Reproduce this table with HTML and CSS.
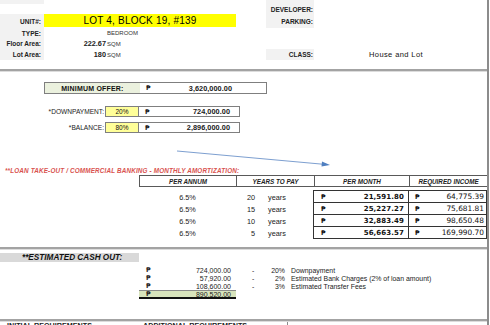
FILE: index.html
```html
<!DOCTYPE html>
<html>
<head>
<meta charset="utf-8">
<link rel="stylesheet" href="styles.css">
</head>
<body>
<div class="sheet">
  <section class="info">
    <div class="lbl r1">DOCUMENT#:</div>
    <div class="rlbl r1"></div>
    <div class="rlbl r2">DEVELOPER:</div>
    <div class="lbl r3">UNIT#:</div>
    <div class="unit">LOT 4, BLOCK 19, #139</div>
    <div class="rlbl r3">PARKING:</div>
    <div class="lbl r4">TYPE:</div>
    <div class="unitcol r4">BEDROOM</div>
    <div class="lbl r5">Floor Area:</div>
    <div class="num r5">222.67</div>
    <div class="unitcol r5">SQM</div>
    <div class="lbl r6">Lot Area:</div>
    <div class="num r6">180</div>
    <div class="unitcol r6">SQM</div>
    <div class="rlbl r6">CLASS:</div>
    <div class="rval r6">House and Lot</div>
  </section>
  <div class="rule"></div>
  <section class="offer">
    <div class="minrow">
      <div class="minlabel">MINIMUM OFFER:</div>
      <div class="money"><span class="peso">₱</span><span>3,620,000.00</span></div>
    </div>
    <div class="dprow">
      <div class="dplabel">*DOWNPAYMENT:</div>
      <div class="pct">20%</div>
      <div class="money boxed"><span class="peso">₱</span><span>724,000.00</span></div>
    </div>
    <div class="dprow bal">
      <div class="dplabel">*BALANCE:</div>
      <div class="pct">80%</div>
      <div class="money boxed"><span class="peso">₱</span><span>2,896,000.00</span></div>
    </div>
    <div class="loantitle">**LOAN TAKE-OUT / COMMERCIAL BANKING - MONTHLY AMORTIZATION:</div>
    <div class="thead">
      <div>PER ANNUM</div>
      <div>YEARS TO PAY</div>
      <div>PER MONTH</div>
      <div>REQUIRED INCOME</div>
    </div>
    <div class="tbody">
      <div class="lcols">
        <div class="lrow"><span class="rate">6.5%</span><span class="yn">20</span><span class="yw">years</span></div>
        <div class="lrow"><span class="rate">6.5%</span><span class="yn">15</span><span class="yw">years</span></div>
        <div class="lrow"><span class="rate">6.5%</span><span class="yn">10</span><span class="yw">years</span></div>
        <div class="lrow"><span class="rate">6.5%</span><span class="yn">5</span><span class="yw">years</span></div>
      </div>
      <div class="box">
        <div class="brow"><div class="pm"><span class="peso">₱</span><span>21,591.80</span></div><div class="ri"><span class="peso">₱</span><span>64,775.39</span></div></div>
        <div class="brow"><div class="pm"><span class="peso">₱</span><span>25,227.27</span></div><div class="ri"><span class="peso">₱</span><span>75,681.81</span></div></div>
        <div class="brow"><div class="pm"><span class="peso">₱</span><span>32,883.49</span></div><div class="ri"><span class="peso">₱</span><span>98,650.48</span></div></div>
        <div class="brow"><div class="pm"><span class="peso">₱</span><span>56,663.57</span></div><div class="ri"><span class="peso">₱</span><span>169,990.70</span></div></div>
      </div>
    </div>
    <svg class="arrow" width="160" height="20" viewBox="0 0 160 20">
      <line x1="1" y1="2" x2="150" y2="15.5" stroke="#7d9fd0" stroke-width="1"/>
      <polygon points="154,16 146,12.5 145.5,17.5" fill="#4f7fc0"/>
    </svg>
  </section>
  <div class="rule"></div>
  <section class="cash">
    <div class="cashlabel">**ESTIMATED CASH OUT:</div>
    <div class="crow"><div class="cmoney"><span class="peso">₱</span><span>724,000.00</span></div><span class="dash">-</span><span class="cpct">20%</span><span class="cdesc">Downpayment</span></div>
    <div class="crow"><div class="cmoney"><span class="peso">₱</span><span>57,920.00</span></div><span class="dash">-</span><span class="cpct">2%</span><span class="cdesc">Estimated Bank Charges (2% of loan amount)</span></div>
    <div class="crow"><div class="cmoney"><span class="peso">₱</span><span>108,600.00</span></div><span class="dash">-</span><span class="cpct">3%</span><span class="cdesc">Estimated Transfer Fees</span></div>
    <div class="crow"><div class="cmoney total"><span class="peso">₱</span><span>890,520.00</span></div></div>
  </section>
  <div class="rule"></div>
  <section class="req">
    <div class="req1">INITIAL REQUIREMENTS</div>
    <div class="req2">ADDITIONAL REQUIREMENTS</div>
    <div class="req3"></div>
  </section>
</div>
</body>
</html>
```
FILE: styles.css
```css
html, body {
  margin: 0;
  padding: 0;
  background: #fff;
}
body {
  width: 490px;
  height: 325px;
  overflow: hidden;
  font-family: "Liberation Sans", "DejaVu Sans", sans-serif;
  color: #111;
}
.sheet {
  position: relative;
  width: 487px;
  height: 325px;
  border-right: 2px solid #8c8c8c;
  overflow: hidden;
}
.peso {
  font-family: "DejaVu Sans", sans-serif;
  font-weight: bold;
}

/* ---------- info grid ---------- */
.info {
  display: grid;
  grid-template-columns: 44px 62px 130px 30px 48px 1fr;
  grid-template-rows: 10px 10px 14px 10.5px 10.5px 11px;
  margin-top: -6px;
  height: 75px;
  align-content: start;
}
.r1 { grid-row: 1; }
.r2 { grid-row: 2; }
.r3 { grid-row: 3; }
.r4 { grid-row: 4; }
.r5 { grid-row: 5; }
.r6 { grid-row: 6; }
.lbl {
  grid-column: 1;
  background: #f2f2f2;
  font-size: 6.5px;
  font-weight: bold;
  text-align: right;
  padding-right: 3px;
  display: flex;
  align-items: center;
  justify-content: flex-end;
  color: #222;
}
.lbl.r1 { align-items: flex-start; line-height: 6px; }
.rlbl {
  grid-column: 5;
  background: #f2f2f2;
  font-size: 6.5px;
  font-weight: bold;
  padding-right: 1px;
  display: flex;
  align-items: center;
  justify-content: flex-end;
  color: #222;
}
.unit {
  grid-column: 2 / 4;
  grid-row: 3;
  height: 13px;
  background: #ffff00;
  font-size: 10px;
  letter-spacing: 0.2px;
  display: flex;
  align-items: center;
  justify-content: center;
  color: #000;
}
.unitcol {
  grid-column: 3;
  font-size: 6px;
  padding-left: 1px;
  display: flex;
  align-items: center;
  color: #333;
}
.num {
  grid-column: 2;
  font-size: 7.3px;
  font-weight: bold;
  display: flex;
  align-items: center;
  justify-content: flex-end;
  color: #222;
}
.rval {
  grid-column: 6;
  font-size: 7.5px;
  letter-spacing: 0.4px;
  padding-left: 55px;
  display: flex;
  align-items: center;
  color: #111;
}

/* ---------- rules ---------- */
.rule {
  height: 2px;
  background: #a3a3a3;
  border-bottom: 1px solid #dcdcdc;
}

/* ---------- offer ---------- */
.offer {
  position: relative;
  height: 175px;
  padding-top: 10px;
  box-sizing: border-box;
}
.minrow {
  display: flex;
  margin-left: 44px;
  width: 223px;
  height: 12px;
  border: 1px solid #7f7f7f;
  box-sizing: border-box;
}
.minlabel {
  width: 95px;
  background: #ebf1de;
  font-size: 7px;
  font-weight: bold;
  letter-spacing: 0.2px;
  display: flex;
  align-items: center;
  justify-content: center;
}
.money {
  width: 97px;
  box-sizing: border-box;
  display: flex;
  align-items: center;
  justify-content: space-between;
  padding: 0 5px 0 6px;
  font-size: 7.3px;
  font-weight: bold;
  letter-spacing: 0.05px;
  color: #1a1a1a;
}
.money .peso { font-size: 6.5px; }
.dprow {
  display: flex;
  height: 11px;
  margin-top: 12px;
}
.dprow.bal { margin-top: 5px; }
.dplabel {
  width: 105px;
  box-sizing: border-box;
  padding-right: 1px;
  font-size: 6.6px;
  display: flex;
  align-items: center;
  justify-content: flex-end;
  color: #222;
}
.pct {
  width: 34px;
  box-sizing: border-box;
  background: #ffff99;
  border: 1px solid #7f7f7f;
  font-size: 6.5px;
  display: flex;
  align-items: center;
  justify-content: center;
}
.money.boxed {
  width: 101px;
  padding-right: 9px;
  border: 1px solid #7f7f7f;
  border-left: none;
}
.loantitle {
  margin-top: 33px;
  padding-left: 5px;
  font-size: 6.35px;
  font-weight: bold;
  font-style: italic;
  color: #d9534f;
  height: 9px;
  line-height: 9px;
  letter-spacing: 0.15px;
}
.thead {
  display: grid;
  grid-template-columns: 97px 78px 95px 78px;
  margin-left: 139px;
  margin-top: 0px;
  height: 12px;
  box-sizing: border-box;
  border: 1px solid #595959;
  border-right: none;
}
.thead div {
  border-right: 1px solid #595959;
  font-size: 6.3px;
  font-weight: bold;
  font-style: italic;
  display: flex;
  align-items: center;
  justify-content: center;
  color: #222;
}
.tbody {
  display: flex;
  margin-left: 139px;
  margin-top: 3px;
}
.lcols {
  width: 175px;
  padding-top: 1px;
}
.lrow {
  display: flex;
  height: 12px;
  align-items: center;
  font-size: 7.3px;
  color: #222;
}
.rate {
  width: 97px;
  text-align: center;
}
.yn {
  width: 19px;
  text-align: right;
}
.yw {
  padding-left: 13px;
}
.box {
  width: 173px;
  border: 1px solid #333;
  border-bottom: none;
}
.brow {
  display: flex;
  height: 11px;
  border-bottom: 1px solid #333;
}
.pm, .ri {
  display: flex;
  align-items: center;
  justify-content: space-between;
  font-family: "DejaVu Sans", sans-serif;
  font-size: 7px;
  box-sizing: border-box;
  color: #111;
}
.pm {
  width: 95px;
  border-right: 1px solid #333;
  padding: 0 4px 0 7px;
  font-weight: bold;
  letter-spacing: 0.1px;
}
.ri {
  width: 77px;
  padding: 0 2px 0 6px;
  font-size: 7.4px;
}
.pm .peso, .ri .peso { font-size: 6.5px; }
.arrow {
  position: absolute;
  left: 176px;
  top: 77px;
}

/* ---------- cash ---------- */
.cash {
  height: 69px;
  padding-top: 3px;
  box-sizing: border-box;
}
.cashlabel {
  width: 139px;
  height: 9px;
  background: #d9d9d9;
  font-size: 8.2px;
  font-weight: bold;
  font-style: italic;
  box-sizing: border-box;
  padding-left: 22px;
  line-height: 9px;
  color: #111;
}
.crow {
  display: flex;
  height: 8px;
  align-items: stretch;
  font-size: 6.9px;
  color: #222;
}
.crow:nth-child(2) { margin-top: 4px; }
.cmoney {
  margin-left: 139px;
  width: 97px;
  box-sizing: border-box;
  display: flex;
  align-items: center;
  justify-content: space-between;
  padding: 0 5px 0 7px;
  font-size: 7px;
}
.cmoney .peso { font-size: 6.6px; }
.cmoney.total {
  background: #d8e4bc;
  border-top: 1px solid #8a8a8a;
  border-bottom: 2px solid #111;
  height: 9px;
}
.dash {
  padding-left: 16px;
  width: 4px;
  display: flex;
  align-items: center;
}
.cpct {
  width: 29px;
  text-align: right;
  display: flex;
  align-items: center;
  justify-content: flex-end;
}
.cdesc {
  padding-left: 6px;
  display: flex;
  align-items: center;
}

/* ---------- requirements ---------- */
.req {
  display: flex;
  height: 10px;
  font-size: 7.2px;
  font-weight: bold;
  line-height: 7px;
  padding-top: 0;
  color: #222;
}
.req1 { width: 136px; padding-left: 7px; margin-top: -0.5px; }
.req2 { width: 144px; margin-top: -0.5px; }
.req3 { border-left: 1px solid #8c8c8c; flex: 1; }
```
